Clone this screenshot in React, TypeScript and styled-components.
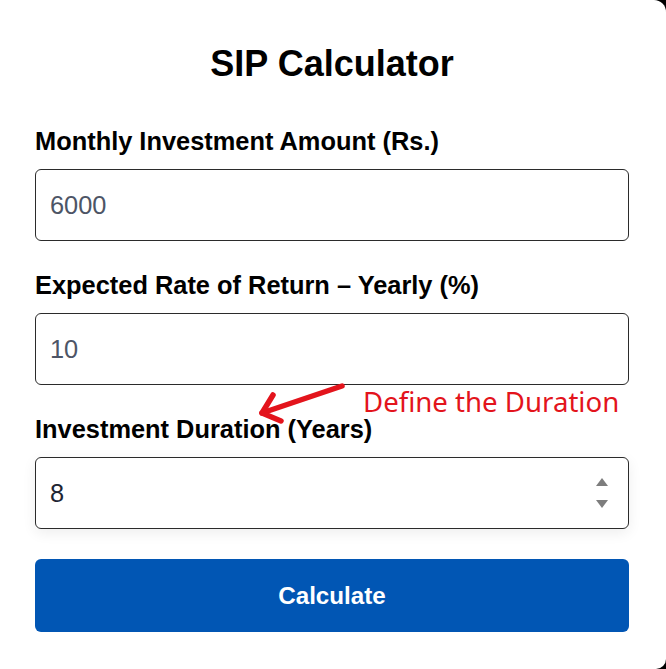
import styled, { createGlobalStyle } from "styled-components";
import { useState } from "react";

const GlobalStyle = createGlobalStyle`
    html, body {
        margin: 0;
        padding: 0;
        background-color: #000;
    }
    * {
        box-sizing: border-box;
    }
`;

const StyledCard = styled.main`
    position: relative;
    width: 666px;
    height: 669px;
    background-color: #fff;
    border-radius: 0 12px 10px 0;
    padding: 43px 37px 0 35px;
    font-family: "Liberation Sans", Arial, sans-serif;
    color: #000;
`;

const StyledTitle = styled.h1`
    margin: 0 0 43px;
    font-size: 36px;
    line-height: 41px;
    font-weight: 700;
    text-align: center;
`;

const StyledGroup = styled.div`
    display: flex;
    flex-direction: column;
    margin-bottom: 30px;
`;

const StyledLabel = styled.label`
    font-size: 25.4px;
    line-height: 29px;
    font-weight: 700;
    margin-bottom: 13px;
`;

const StyledInputWrap = styled.div`
    position: relative;
`;

const StyledInput = styled.input<{ $lifted?: boolean }>`
    width: 100%;
    height: 72px;
    padding: 0 14px;
    border: 1.3px solid #2b2b2b;
    border-radius: 6px;
    font-family: "Liberation Sans", Arial, sans-serif;
    font-size: 25.4px;
    color: #1e2533;
    background: #fff;
    outline: none;
    box-shadow: ${(props) => (props.$lifted ? "0 4px 14px rgba(0,0,0,0.07)" : "none")};
    -moz-appearance: textfield;

    &::placeholder {
        color: #4d5566;
        opacity: 1;
    }

    &::-webkit-inner-spin-button,
    &::-webkit-outer-spin-button {
        -webkit-appearance: none;
        margin: 0;
    }
`;

const StyledSpinner = styled.div`
    position: absolute;
    top: 50%;
    right: 21px;
    transform: translateY(-50%);
    display: flex;
    flex-direction: column;
    gap: 14px;
    pointer-events: none;
`;

const StyledButton = styled.button`
    width: 100%;
    height: 73px;
    border: none;
    border-radius: 6px;
    background-color: #0156b4;
    color: #fff;
    font-family: "Liberation Sans", Arial, sans-serif;
    font-size: 24.2px;
    font-weight: 700;
    cursor: pointer;
`;

// annotation drawn over the form
const StyledNote = styled.span`
    position: absolute;
    left: 363px;
    top: 382px;
    font-family: "Noto Sans", "Open Sans", sans-serif;
    font-size: 27.6px;
    line-height: 38px;
    color: #e3141c;
    white-space: nowrap;
`;

const StyledArrow = styled.svg`
    position: absolute;
    left: 250px;
    top: 376px;
    overflow: visible;
`;

export default function App() {
    const [duration, setDuration] = useState("8");

    return (
        <>
            <GlobalStyle />
            <StyledCard>
                <StyledTitle>SIP Calculator</StyledTitle>

                <StyledGroup>
                    <StyledLabel htmlFor="amount">Monthly Investment Amount (Rs.)</StyledLabel>
                    <StyledInput id="amount" type="number" placeholder="6000" />
                </StyledGroup>

                <StyledGroup>
                    <StyledLabel htmlFor="rate">Expected Rate of Return – Yearly (%)</StyledLabel>
                    <StyledInput id="rate" type="number" placeholder="10" />
                </StyledGroup>

                <StyledGroup>
                    <StyledLabel htmlFor="years">Investment Duration (Years)</StyledLabel>
                    <StyledInputWrap>
                        <StyledInput
                            id="years"
                            type="number"
                            $lifted
                            value={duration}
                            onChange={(e) => setDuration(e.target.value)}
                        />
                        <StyledSpinner>
                            <svg width="12" height="8" viewBox="0 0 12 8">
                                <path d="M6 0 L12 8 L0 8 Z" fill="#7d7d7d" />
                            </svg>
                            <svg width="12" height="8" viewBox="0 0 12 8">
                                <path d="M0 0 L12 0 L6 8 Z" fill="#7d7d7d" />
                            </svg>
                        </StyledSpinner>
                    </StyledInputWrap>
                </StyledGroup>

                <StyledButton>Calculate</StyledButton>

                <StyledArrow width="100" height="50">
                    <g stroke="#e3141c" strokeWidth="5.5" strokeLinecap="round" fill="none">
                        <path d="M92 10 L12 37" />
                        <path d="M23 19 L12 37 L31 45" strokeLinejoin="round" />
                    </g>
                </StyledArrow>
                <StyledNote>Define the Duration</StyledNote>
            </StyledCard>
        </>
    );
}
